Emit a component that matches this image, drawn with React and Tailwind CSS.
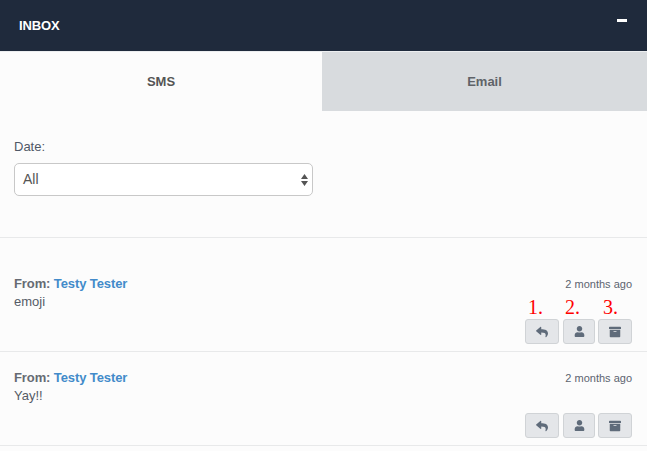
import { FaReply, FaUser, FaArchive } from "react-icons/fa";

const messages = [
  { id: 1, body: "emoji", notes: true },
  { id: 2, body: "Yay!!", notes: false },
];

function ActionButton({ width, note, noteLeft, children }) {
  return (
    <button className={`relative flex h-[25px] ${width} items-center justify-center rounded-[3px] border border-[#d0d3d6] bg-[#e4e6e9] text-[#5f6b7a]`}>
      {children}
      {note && (
        <span className={`absolute ${noteLeft} top-[-25px] font-['Liberation_Serif',serif] text-[20px] leading-[24px] text-[#ff0000]`}>
          {note}
        </span>
      )}
    </button>
  );
}

function Message({ body, notes }) {
  return (
    <div className="flex h-[94px] flex-col border-b border-[#e8e9ea] px-[14px] pt-[17px]">
      <div className="flex items-center justify-between leading-[18px]">
        <div className="text-[13px] font-bold tracking-[-0.1px] text-[#666b73]">
          From: <span className="text-[#428bca]">Testy Tester</span>
        </div>
        <div className="pr-px text-[11px] text-[#5c6470]">2 months ago</div>
      </div>
      <div className="text-[13px] leading-[18px] text-[#555b66]">{body}</div>
      <div className="mt-2 flex justify-end gap-[3px] pr-px">
        <ActionButton width="w-[34px] mr-px" note={notes ? "1." : null} noteLeft="left-[2px]">
          <FaReply size={12} />
        </ActionButton>
        <ActionButton width="w-[32px]" note={notes ? "2." : null} noteLeft="left-[1px]">
          <FaUser size={11} />
        </ActionButton>
        <ActionButton width="w-[34px]" note={notes ? "3." : null} noteLeft="left-[4px]">
          <FaArchive size={12} />
        </ActionButton>
      </div>
    </div>
  );
}

export default function App() {
  return (
    <div className="h-[451px] w-[647px] overflow-hidden bg-[#fcfcfc] font-['Liberation_Sans',sans-serif]">
      {/* Header */}
      <div className="flex h-[51px] items-center justify-between bg-[#1f2a3c] pl-[19px] pr-5">
        <h1 className="text-[13px] font-bold tracking-[-0.1px] text-white">INBOX</h1>
        <div className="mb-[10px] h-[3px] w-[10px] bg-white"></div>
      </div>

      {/* Tabs */}
      <div className="flex h-[60px] border-t border-[#eceef0]">
        <div className="flex w-[322px] items-center justify-center text-[13px] font-bold text-[#555]">SMS</div>
        <div className="flex flex-1 items-center justify-center bg-[#d8dbde] text-[13px] font-bold text-[#5f6368]">Email</div>
      </div>

      {/* Date filter */}
      <div className="h-[127px] border-b border-[#e8e9ea] px-[14px] pt-[27px]">
        <label className="block text-[13px] leading-[18px] text-[#4f5866]">Date:</label>
        <div className="mt-[7px] flex h-[33px] w-[299px] items-center justify-between rounded-[5px] border border-[#c8c8c8] bg-white pl-2 pr-[4px] text-[14px] text-[#555]">
          <span>All</span>
          <svg width="7" height="12" viewBox="0 0 7 12" className="text-[#555]">
            <path d="M3.5 0 7 5H0z M0 7h7l-3.500 5z" fill="currentColor" />
          </svg>
        </div>
      </div>

      {/* Messages */}
      <div className="pt-5">
        {messages.map((m) => (
          <Message key={m.id} body={m.body} notes={m.notes} />
        ))}
      </div>
    </div>
  );
}
